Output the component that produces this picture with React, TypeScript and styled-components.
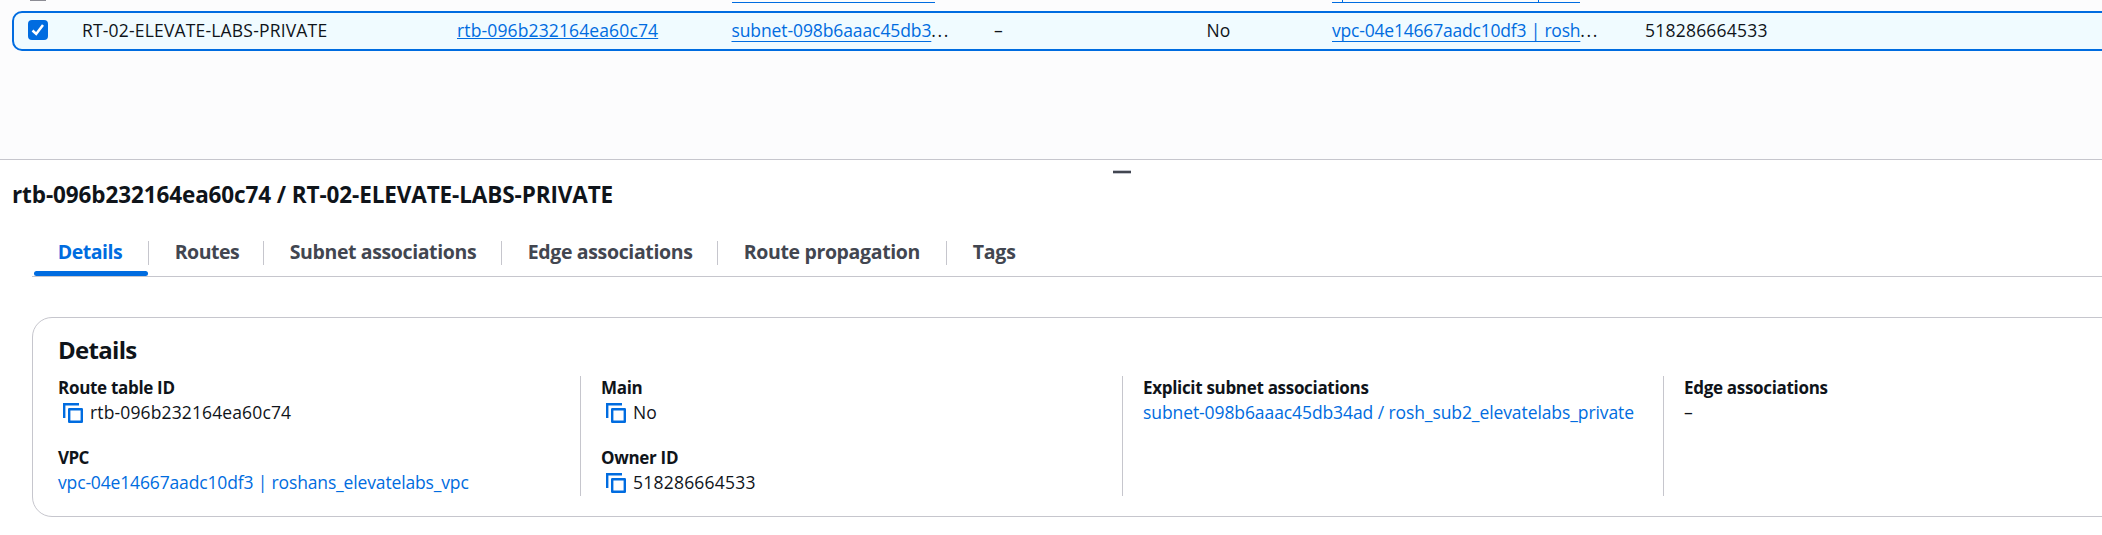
import React from 'react';
import styled, { createGlobalStyle } from 'styled-components';

const blue = '#006ce0';
const ink = '#0f141a';
const line = '#c6c6cd';

const GlobalStyle = createGlobalStyle`
  * { box-sizing: border-box; }
  body {
    margin: 0;
    overflow: hidden;
    background: #fff;
    color: ${ink};
    font-family: "Open Sans", "Noto Sans", sans-serif;
    font-size: 17.5px;
  }
`;

const Page = styled.main`
  height: 535px;
  display: flex;
  flex-direction: column;
  overflow: hidden;
`;

const TableArea = styled.section`
  height: 159px;
  flex: none;
  background: #fcfcfd;
  overflow: hidden;
`;

const columns = '68px 375px 274.5px 262.5px 212.5px 125.5px 313px 1fr';

const PreviousRow = styled.div`
  display: grid;
  grid-template-columns: ${columns};
  height: 11px;
  align-items: start;
  padding-left: 14px;
`;

const CheckboxEdge = styled.span`
  width: 16px;
  height: 1px;
  margin-left: 16px;
  background: #8c8c94;
`;

const LinkEdge = styled.span<{ $width: number }>`
  display: flex;
  width: ${p => p.$width}px;
  height: 3px;
  border-bottom: 1px solid ${blue};
`;

const Descender = styled.i<{ $gap: number }>`
  width: 1px;
  height: 2px;
  margin-left: ${p => p.$gap}px;
  background: ${blue};
`;

const SelectedRow = styled.div`
  display: grid;
  grid-template-columns: ${columns};
  align-items: center;
  height: 40px;
  margin: 0 -20px 0 12px;
  border: 2px solid ${blue};
  border-radius: 10px;
  background: #f0fbff;
`;

const Checkbox = styled.span`
  display: flex;
  width: 20px;
  height: 20px;
  margin: -2px 0 0 14px;
  border-radius: 4px;
  background: ${blue};
`;

const Cell = styled.span<{ $spacing?: number }>`
  line-height: 24px;
  padding-bottom: 3px;
  white-space: nowrap;
  letter-spacing: ${p => p.$spacing ?? 0}px;
`;

const RowLink = styled.a<{ $offset: number }>`
  color: ${blue};
  text-decoration: underline 1px;
  text-underline-offset: ${p => p.$offset}px;
  text-decoration-skip-ink: none;
`;

const Ellipsis = styled.span`
  letter-spacing: 1.6px;
`;

const SplitPanel = styled.section`
  flex: 1;
  border-top: 1px solid ${line};
  background: #fff;
`;

const HandleBar = styled.div`
  display: flex;
  height: 20px;
  padding: 10px 0 0 1113px;
`;

const Handle = styled.span`
  width: 18px;
  height: 4px;
  border: solid #c3c5cd;
  border-width: 1px 0;
  background: #424650;
`;

const PanelTitle = styled.h2`
  height: 28px;
  margin: 0 0 0 12px;
  font-size: 22.5px;
  line-height: 29px;
  font-weight: 700;
  letter-spacing: -0.11px;
`;

const Tabs = styled.nav`
  display: flex;
  height: 45px;
  margin: 24px 0 0 32px;
  border-bottom: 1px solid ${line};
`;

const Tab = styled.a<{ $width: number; $active?: boolean }>`
  display: flex;
  flex-direction: column;
  justify-content: space-between;
  width: ${p => p.$width}px;
  height: 44px;
  color: ${p => (p.$active ? blue : '#424650')};
  font-size: 19.5px;
  font-weight: 700;
  white-space: nowrap;
`;

const TabLabel = styled.span<{ $last?: boolean; $spacing: number }>`
  height: 24px;
  margin-top: 9px;
  padding-left: 25.7px;
  border-right: ${p => (p.$last ? 'none' : `1px solid ${line}`)};
  line-height: 22px;
  letter-spacing: ${p => p.$spacing}px;
`;

const ActiveBar = styled.span`
  height: 5px;
  margin: 0 1px 0 2px;
  border-radius: 3px;
  background: ${blue};
`;

const Card = styled.article`
  height: 200px;
  margin: 40px -30px 0 32px;
  padding: 18px 0 0 25px;
  border: 1px solid ${line};
  border-radius: 20px;
`;

const CardTitle = styled.h3`
  height: 30px;
  margin: 0 0 10px;
  font-size: 24px;
  line-height: 28px;
  font-weight: 700;
  letter-spacing: -0.7px;
`;

const Columns = styled.div`
  display: grid;
  grid-template-columns: 522px 542px 541px 1fr;
  height: 120px;
`;

const Column = styled.div<{ $first?: boolean }>`
  display: flex;
  flex-direction: column;
  gap: 21px;
  padding-left: ${p => (p.$first ? 0 : 20)}px;
  border-left: ${p => (p.$first ? 'none' : `1px solid ${line}`)};
`;

const Label = styled.div<{ $spacing?: number }>`
  font-size: 17px;
  line-height: 24px;
  font-weight: 700;
  letter-spacing: ${p => p.$spacing ?? -0.31}px;
`;

const Value = styled.div<{ $spacing: number; $link?: boolean }>`
  display: flex;
  height: 25px;
  line-height: 25px;
  white-space: nowrap;
  letter-spacing: ${p => p.$spacing}px;
  color: ${p => (p.$link ? blue : ink)};
`;

const CopySvg = styled.svg`
  width: 20px;
  height: 20px;
  margin: 3px 7px 0 5px;
  flex: none;
`;

const CopyIcon = () => (
  <CopySvg viewBox="0 0 20 20" fill="none" stroke={blue} strokeWidth="2.4">
    <path d="M1.2 15V1.2H16" />
    <rect x="6.2" y="6.2" width="12.6" height="12.6" strokeLinejoin="round" />
  </CopySvg>
);

type Field = { label: string; value: string; spacing: number; labelSpacing?: number; copy?: boolean; link?: boolean };

const fields: Field[][] = [
  [
    { label: 'Route table ID', value: 'rtb-096b232164ea60c74', spacing: 0.13, copy: true },
    { label: 'VPC', value: 'vpc-04e14667aadc10df3 | roshans_elevatelabs_vpc', spacing: -0.15, labelSpacing: -0.6, link: true },
  ],
  [
    { label: 'Main', value: 'No', spacing: 0, copy: true },
    { label: 'Owner ID', value: '518286664533', spacing: 0.22, copy: true },
  ],
  [
    {
      label: 'Explicit subnet associations',
      value: 'subnet-098b6aaac45db34ad / rosh_sub2_elevatelabs_private',
      spacing: -0.09,
      link: true,
    },
  ],
  [{ label: 'Edge associations', value: '–', spacing: 0 }],
];

const tabs = [
  { name: 'Details', width: 117, spacing: -0.45 },
  { name: 'Routes', width: 115, spacing: -0.5 },
  { name: 'Subnet associations', width: 238, spacing: -0.38 },
  { name: 'Edge associations', width: 216, spacing: -0.35 },
  { name: 'Route propagation', width: 229, spacing: -0.35 },
  { name: 'Tags', width: 90, spacing: -0.2 },
];

export default function App() {
  return (
    <Page>
      <GlobalStyle />
      <TableArea>
        <PreviousRow>
          <CheckboxEdge />
          <span />
          <span />
          <LinkEdge $width={203} />
          <span />
          <span />
          <LinkEdge $width={248}>
            <Descender $gap={10} />
            <Descender $gap={195} />
          </LinkEdge>
        </PreviousRow>
        <SelectedRow>
          <Checkbox>
            <svg viewBox="0 0 20 20" fill="none" stroke="#fff" strokeWidth="2.5">
              <path d="M4.5 10.5L8.2 14L15 5" />
            </svg>
          </Checkbox>
          <Cell $spacing={0.18}>RT-02-ELEVATE-LABS-PRIVATE</Cell>
          <Cell $spacing={0.13}>
            <RowLink $offset={1}>rtb-096b232164ea60c74</RowLink>
          </Cell>
          <Cell $spacing={-0.1}>
            <RowLink $offset={4}>subnet-098b6aaac45db3</RowLink>
            <Ellipsis>...</Ellipsis>
          </Cell>
          <Cell>–</Cell>
          <Cell>No</Cell>
          <Cell $spacing={-0.2}>
            <RowLink $offset={4}>vpc-04e14667aadc10df3 | rosh</RowLink>
            <Ellipsis>...</Ellipsis>
          </Cell>
          <Cell $spacing={0.22}>518286664533</Cell>
        </SelectedRow>
      </TableArea>
      <SplitPanel>
        <HandleBar>
          <Handle />
        </HandleBar>
        <PanelTitle>rtb-096b232164ea60c74 / RT-02-ELEVATE-LABS-PRIVATE</PanelTitle>
        <Tabs>
          {tabs.map((tab, i) => (
            <Tab key={tab.name} $width={tab.width} $active={i === 0}>
              <TabLabel $last={i === tabs.length - 1} $spacing={tab.spacing}>
                {tab.name}
              </TabLabel>
              {i === 0 && <ActiveBar />}
            </Tab>
          ))}
        </Tabs>
        <Card>
          <CardTitle>Details</CardTitle>
          <Columns>
            {fields.map((group, i) => (
              <Column key={i} $first={i === 0}>
                {group.map(field => (
                  <div key={field.label}>
                    <Label $spacing={field.labelSpacing}>{field.label}</Label>
                    <Value $spacing={field.spacing} $link={field.link}>
                      {field.copy && <CopyIcon />}
                      {field.value}
                    </Value>
                  </div>
                ))}
              </Column>
            ))}
          </Columns>
        </Card>
      </SplitPanel>
    </Page>
  );
}
